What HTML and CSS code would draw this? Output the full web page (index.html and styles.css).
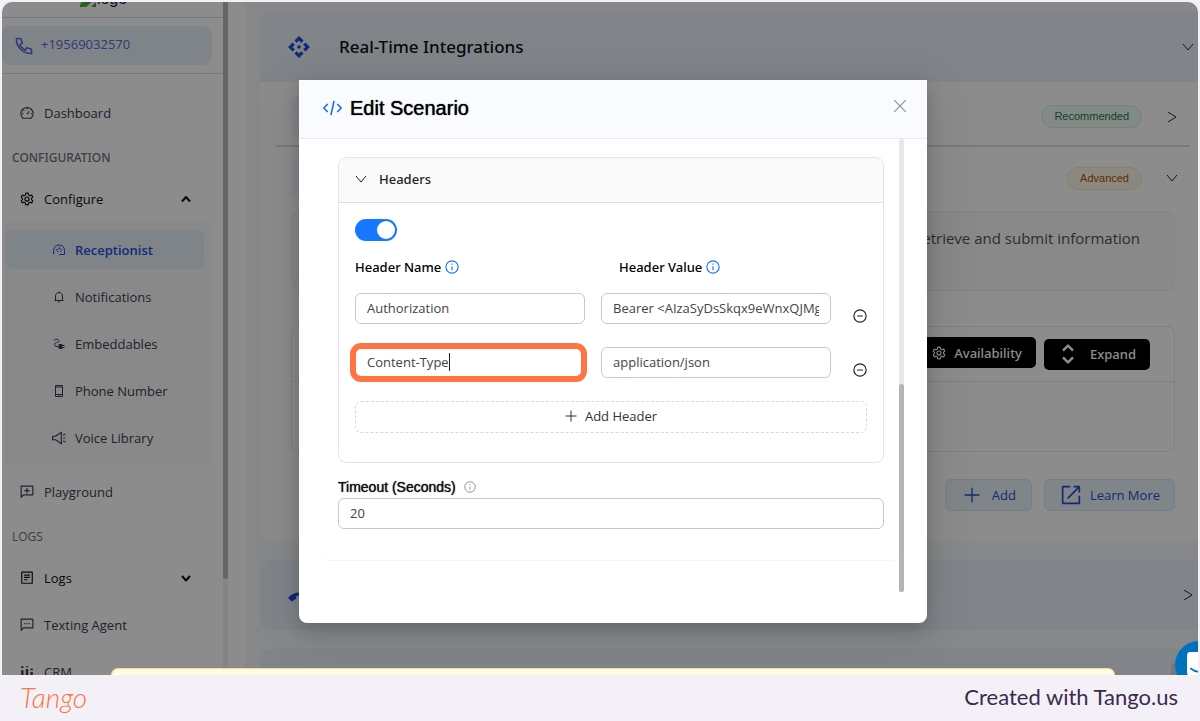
FILE: index.html
```html
<!DOCTYPE html>
<html lang="en">
<head>
<meta charset="utf-8">
<title>Edit Scenario</title>
<link rel="stylesheet" href="styles.css">
</head>
<body>
<svg class="sprite" aria-hidden="true">
  <symbol id="gear" viewBox="0 0 24 24"><path d="M10 2h4l.7 3.100 2.300 1.300 3-1 2 3.500-2.300 2.100v2l2.300 2.100-2 3.500-3-1-2.300 1.300-.7 3.100h-4l-.7-3.100L7 17.600l-3 1-2-3.500L4.300 13v-2L2 8.900l2-3.500 3 1 2.300-1.300z"/><circle cx="12" cy="12" r="3.500"/></symbol>
  <symbol id="down" viewBox="0 0 24 24"><path d="m2 6 10 12L22 6"/></symbol>
  <symbol id="right" viewBox="0 0 24 24"><path d="m4 2 16 10-16 10"/></symbol>
  <symbol id="info" viewBox="0 0 24 24"><circle cx="12" cy="12" r="10.500"/><path d="M12 10.500v7M12 6v2"/></symbol>
  <symbol id="minus" viewBox="0 0 24 24"><circle cx="12" cy="12" r="10.500"/><path d="M7 12h10"/></symbol>
  <symbol id="plus" viewBox="0 0 24 24"><path d="M12 1v22M1 12h22"/></symbol>
</svg>
<main class="stage">
  <aside class="sidebar">
    <nav class="nav">
      <div class="brand"><svg class="broken" viewBox="0 0 16 16"><path fill="#c3d9f2" d="M0 0h16v8l-9 8H0z"/><path fill="#4caf35" d="M0 14 6 7l5 4-5 5H0z"/><path fill="#5b9a4d" d="m11 16 5-5v5z"/></svg><span>logo</span></div>
      <a class="phone" href="#"><svg class="ico i20" viewBox="0 0 24 24"><path d="M3 3h5l2 5.500-3 2c1.500 3 3.500 5 6.500 6.500l2-3L21 16v5C11 21.500 2.500 13 3 3z"/></svg><span>+19569032570</span></a>
      <div class="menu">
        <a class="item" href="#"><svg class="ico i14" viewBox="0 0 24 24"><path d="M5 21h14c2-2 3.500-4.500 3.500-8a10.500 10.500 0 0 0-21 0c0 3.500 1.500 6 3.500 8zM12 14l4-5M12 3v3M4 13h2M18 13h2M6 7l1.500 1.500"/></svg><span>Dashboard</span></a>
        <h2 class="group strong">CONFIGURATION</h2>
        <button class="item dark" type="button"><svg class="ico i14"><use href="#gear"/></svg><span>Configure</span><svg class="ico caret" viewBox="0 0 24 24"><path d="m4 17 8-9 8 9"/></svg></button>
        <div class="sub">
          <a class="item on" href="#"><svg class="ico i12" viewBox="0 0 24 24"><path d="M3 19H1v-6C1 6 6 2 12 2s11 4 11 11v8H12M5 12c5 0 7-2 8-5 1 3 3 5 6 5"/><path d="M9 14v2M15 14v2"/></svg><span>Receptionist</span></a>
          <a class="item" href="#"><svg class="ico i12" viewBox="0 0 24 24"><path d="M3 19h18M5 19v-9c0-9 14-9 14 0v9M12 1v3M10 22h4"/></svg><span>Notifications</span></a>
          <a class="item" href="#"><svg class="ico i12" viewBox="0 0 24 24"><path d="M2 5c2-4 10-3 10 1S2 8 3 13s4 4 8 4"/><path fill="currentColor" d="M12 13h6v8h-6zM18 15h5M18 19h5"/></svg><span>Embeddables</span></a>
          <a class="item" href="#"><svg class="ico i12" viewBox="0 0 24 24"><path d="M5 1h14v22H5zM5 4h14M5 19h14"/><path d="M11 21h2"/></svg><span>Phone Number</span></a>
          <a class="item" href="#"><svg class="ico i14" viewBox="0 0 24 24"><path d="M1 9h5l10-7v20L6 15H1zM19 7l4-2M19 12h4M19 17l4 2"/></svg><span>Voice Library</span></a>
        </div>
        <a class="item" href="#"><svg class="ico i14" viewBox="0 0 24 24"><path d="M2 2h20v15H6l-4 4zM12 5v9M7.500 9.500h9"/></svg><span>Playground</span></a>
        <h2 class="group">LOGS</h2>
        <button class="item dark" type="button"><svg class="ico i14" viewBox="0 0 24 24"><path d="M3 2h18v19H3zM7 7h10M7 11h10M7 15h6"/></svg><span>Logs</span><svg class="ico caret" viewBox="0 0 24 24"><path d="m4 8 8 9 8-9"/></svg></button>
        <a class="item" href="#"><svg class="ico i14" viewBox="0 0 24 24"><path d="M2 2h20v15H6l-4 4zM7 9.500h2M11 9.500h2M15 9.500h2"/></svg><span>Texting Agent</span></a>
        <a class="item" href="#"><svg class="ico i14 bars" viewBox="0 0 24 24"><path d="M4 9v13M12 7v15M20 12v10M4 2v3M12 2v2M20 6v3"/></svg><span>CRM</span></a>
      </div>
    </nav>
    <div class="side-track"><div class="side-thumb"></div></div>
  </aside>

  <div class="content">
    <section class="card">
      <header class="card-head">
        <svg class="i22 blue" viewBox="0 0 24 24" fill="currentColor"><path d="m12 0 5 5-2.500 2.500L12 5 9.500 7.500 7 5zM12 24l-5-5 2.500-2.500L12 19l2.500-2.500L17 19zM0 12l5-5 2.500 2.500L5 12l2.500 2.500L5 17zM24 12l-5 5-2.500-2.500L19 12l-2.500-2.500L19 7z"/><circle cx="12" cy="12" r="2"/></svg>
        <h1>Real-Time Integrations</h1>
        <svg class="ico i12 end"><use href="#down"/></svg>
      </header>
      <div class="card-body">
        <div class="row first"><span class="tile"></span><span class="tag green">Recommended</span><svg class="ico i12"><use href="#right"/></svg></div>
        <div class="row"><span class="tile"></span><span class="tag amber">Advanced</span><svg class="ico i12"><use href="#down"/></svg></div>
        <div class="detail">
          <p class="note">retrieve and submit information</p>
          <div class="box">
            <div class="box-head">
              <button class="black" type="button"><svg class="ico i14"><use href="#gear"/></svg>Availability</button>
              <button class="black expand" type="button"><svg class="ico thick i20" viewBox="0 0 24 24"><path d="m6 8 6-6 6 6M6 16l6 6 6-6"/></svg>Expand</button>
            </div>
          </div>
          <div class="actions">
            <button class="soft" type="button"><svg class="ico i16"><use href="#plus"/></svg>Add</button>
            <a class="soft learn" href="#"><svg class="ico i20" viewBox="0 0 24 24"><path d="M11 2H2v20h20v-9M15 2h7v7M22 2 8 16"/></svg>Learn More</a>
          </div>
        </div>
      </div>
    </section>
    <section class="card">
      <header class="card-head"><svg class="i22 blue lower" viewBox="0 0 24 24" fill="currentColor"><path d="M0 13C6 5 18 5 24 13l-4 4-5-3v-3c-2-1-4-1-6 0v3l-5 3z"/></svg><svg class="ico i12 end"><use href="#right"/></svg></header>
    </section>
    <section class="card"><header class="card-head"></header></section>
  </div>

  <div class="mask">
    <form class="modal" role="dialog" aria-labelledby="title">
      <header class="modal-head">
        <svg class="ico code" viewBox="0 0 24 20"><path d="M6 5 1 10l5 5M18 5l5 5-5 5M14 1 10 19"/></svg>
        <h2 id="title">Edit Scenario</h2>
        <button class="close" type="button" aria-label="Close"><svg class="ico i14" viewBox="0 0 24 24"><path d="m2 2 20 20M22 2 2 22"/></svg></button>
      </header>
      <div class="modal-body">
        <div class="scroller">
          <div class="sheet">
            <section class="panel">
              <button class="panel-head" type="button"><svg class="ico i12"><use href="#down"/></svg>Headers</button>
              <div class="panel-body">
                <input class="switch" type="checkbox" role="switch" aria-label="Headers" checked>
                <div class="grid labels"><span>Header Name <svg class="ico i14"><use href="#info"/></svg></span><span>Header Value <svg class="ico i14"><use href="#info"/></svg></span></div>
                <div class="grid">
                  <input class="field" aria-label="Header name 1" value="Authorization">
                  <input class="field" aria-label="Header value 1" value="Bearer &lt;AIzaSyDsSkqx9eWnxQJMg7">
                  <button class="remove" type="button" aria-label="Remove header 1"><svg class="ico i14"><use href="#minus"/></svg></button>
                </div>
                <div class="grid">
                  <div class="focus"><input class="field" aria-label="Header name 2" value="Content-Type"><i class="cursor"></i></div>
                  <input class="field" aria-label="Header value 2" value="application/json">
                  <button class="remove" type="button" aria-label="Remove header 2"><svg class="ico i14"><use href="#minus"/></svg></button>
                </div>
                <button class="add" type="button"><svg class="ico i12"><use href="#plus"/></svg>Add Header</button>
              </div>
            </section>
            <label class="timeout" for="timeout">Timeout (Seconds) <svg class="ico i12"><use href="#info"/></svg></label>
            <input class="field" id="timeout" value="20">
          </div>
        </div>
        <div class="track"><div class="thumb"></div></div>
      </div>
    </form>
  </div>
  <div class="toast"></div>
  <div class="chat-base"></div>
  <button class="chat" type="button" aria-label="Chat"><svg viewBox="0 0 24 24"><rect x="1" y="0" width="22" height="22" rx="3" fill="#fff"/><path d="M4 15c5 4 11 4 16 0" fill="none" stroke="#0071bd" stroke-width="1.500"/></svg></button>
</main>
<footer class="footer"><span class="logo">Tango</span><span class="credit">Created with Tango.us</span></footer>
</body>
</html>
```
FILE: styles.css
```css
* { box-sizing: border-box; }
body { margin: 0; min-height: 100vh; display: flex; flex-direction: column; background: #f3f1f7; color: #1f2937; font: 13px/20px "Open Sans", "Noto Sans", sans-serif; }
button, input { font: inherit; color: inherit; }
button { margin: 0; padding: 0; border: 0; background: none; }
a { color: inherit; text-decoration: none; }
h1, h2, p { margin: 0; }
svg { display: block; flex: none; }
.sprite { position: absolute; width: 0; height: 0; }
.ico { fill: none; stroke: currentColor; stroke-width: 2; stroke-linejoin: round; }
.thick { stroke-width: 3; }
.i12 { width: 12px; height: 12px; }
.i14 { width: 14px; height: 14px; }
.i16 { width: 16px; height: 16px; }
.i20 { width: 20px; height: 20px; }
.i22 { width: 22px; height: 22px; }
.blue { color: #1d4fdb; }

.stage { position: relative; flex: 1 0 0; min-height: 0; display: flex; margin: 2px 2px 0; overflow: hidden; border-radius: 10px 10px 0 0; background: #fff; }

.sidebar { display: flex; flex: none; width: 226px; }
.nav { flex: 1; min-width: 0; }
.brand { display: flex; align-items: start; justify-content: center; gap: 1px; height: 16px; padding-right: 18px; border-bottom: 1px solid #d4d7de; font: 16px/20px "Liberation Sans", sans-serif; overflow: hidden; }
.broken { width: 16px; height: 16px; }
.brand svg { margin-top: -11px; }
.brand span { margin-top: -13px; }
.phone { display: flex; align-items: center; gap: 7px; height: 39px; margin: 8px 11px 8px 0; padding: 0 12px; border-radius: 8px; background: #e8f0fa; color: #6366d1; }
.phone span { padding-bottom: 4px; }
.menu { display: flex; flex-direction: column; padding-top: 19px; border-top: 1px solid #d3dbf5; }
.item { display: flex; flex: none; align-items: center; gap: 10px; height: 39px; margin-bottom: 8px; padding: 0 27px 0 18px; color: #374151; text-align: left; }
.item.dark { color: #111; }
.caret { width: 12px; height: 12px; margin-left: auto; margin-right: 4px; stroke-width: 4; }
.bars { stroke-width: 4; }
.group { height: 20px; margin: 8px 10px 11px; font-size: 12px; font-weight: 400; color: #6b7280; }
.group.strong { font-family: "Noto Sans", sans-serif; font-weight: 500; }
.sub { display: flex; flex-direction: column; gap: 8px; margin: -4px 11px 7px 3px; padding: 8px; background: #fafafa; }
.sub .item { margin: 0 0 0 -8px; padding-left: 48px; border-radius: 8px; }
.sub .item.on { background: #e8f0fa; color: #1d4ed8; font-weight: 600; }
.sub .i14 { margin: 0 -1px; }
.side-track { width: 5px; background: #f0f0f0; }
.side-thumb { height: 577px; border-radius: 0 0 3px 3px; background: #bbb; }

.content { display: flex; flex: 1; min-width: 0; flex-direction: column; gap: 19px; margin: 0 -8px 0 17px; padding: 10px 0 0 15px; background: #f5f7fa; }
.card { flex: none; border-radius: 10px; background: #fff; overflow: hidden; }
.card-head { display: flex; align-items: center; height: 70px; padding: 0 12px 0 28px; background: #ecf3fc; }
.card-head h1 { margin-left: 29px; font: 500 17px/24px "Noto Sans", sans-serif; color: #111; }
.end { margin-left: auto; }
.card-body { padding: 0 16px 32px; }
.row { display: flex; align-items: center; justify-content: end; height: 62px; padding: 0 12px 0 15px; }
.first { height: 65px; padding-top: 6px; border-bottom: 2px solid #ddd; }
.row .ico { margin-left: 24px; }
.tile { width: 40px; height: 40px; margin-right: auto; border-radius: 8px; background: #f5f7ff; }
.tag { padding: 0 12px; border: 1px solid; border-radius: 12px; font: 12px/21px "Liberation Sans", sans-serif; }
.tag { font-size: 11px; }
.green { border-color: #d0f0df; background: #effaf4; color: #15803d; }
.amber { border-color: #f5e8c0; background: #fdf8e8; color: #b45309; }
.detail { padding: 2px 15px 0; }
.note { height: 80px; padding: 16px 34px; border: 1px solid #e8eef9; border-radius: 10px; background: #f9fafc; font-size: 15px; text-align: right; color: #4b5563; }
.box { height: 126px; margin: 35px 0 27px; border: 1px solid #e5e7eb; border-radius: 8px; }
.box-head { display: flex; align-items: center; justify-content: end; gap: 8px; height: 55px; padding: 0 24px; border-bottom: 1px solid #e5e7eb; }
.black { display: flex; align-items: center; gap: 8px; height: 31px; margin-bottom: 3px; padding: 0 14px; border-radius: 5px; background: #000; color: #fff; font-family: "Noto Sans", sans-serif; font-weight: 500; }
.expand { gap: 12px; margin: 0; padding: 0 14px; }
.actions { display: flex; justify-content: end; gap: 12px; }
.soft { display: flex; align-items: center; gap: 12px; height: 32px; padding: 0 15px 0 18px; border: 1px solid #d5e4fb; border-radius: 6px; background: #eaf2fb; color: #2451c9; }
.learn { gap: 9px; padding: 0 14px 0 16px; }
.lower { margin-top: 4px; }
.card-body { padding-bottom: 30px; }

.mask { position: absolute; inset: 0; display: flex; justify-content: center; align-items: start; padding: 78px 0 0 26px; background: rgba(0, 0, 0, .45); }
.modal { width: 628px; max-width: 100%; border-radius: 0 0 8px 8px; background: #fff; box-shadow: 0 6px 16px rgba(0,0,0,.16), 0 9px 48px 8px rgba(0,0,0,.1); overflow: hidden; }
.modal-head { display: flex; align-items: center; gap: 8px; height: 59px; padding: 0 20px 3px 24px; border-bottom: 1px solid #e5e8ec; background: #f9fbfe; }
.modal-head h2 { font: 20px/24px "Liberation Sans", sans-serif; color: #000; text-shadow: 0 0 1px #000; }
.code { width: 19px; height: 16px; color: #1668f5; }
.close { margin-left: auto; padding-bottom: 3px; color: #909399; }
.modal-body { display: flex; padding: 0 23px 31px; }
.scroller { flex: 1; min-width: 0; padding-bottom: 31px; }
.sheet { padding: 18px 15px 31px 16px; border-bottom: 1px solid #f4f4f4; border-radius: 0 0 8px 8px; }
.track { display: flex; flex-direction: column; justify-content: end; width: 5px; border-radius: 3px; background: #e8e8e8; }
.thumb { height: 46%; border-radius: 3px; background: #b5b5b5; }
.panel { border: 1px solid #e5e5e5; border-radius: 8px; overflow: hidden; }
.panel-head { display: flex; align-items: center; gap: 12px; width: 100%; height: 45px; padding: 0 16px 2px; border-bottom: 1px solid #dcdcdc; background: #fafafa; color: #222; font-family: "Noto Sans", sans-serif; font-weight: 500; }
.panel-body { padding: 16px 16px 29px; }
.switch { appearance: none; display: block; width: 42px; height: 22px; margin: 0 0 15px; padding: 2px; border-radius: 11px; background: #1677ff; }
.switch::before { content: ""; display: block; width: 18px; height: 18px; margin-left: auto; border-radius: 50%; background: #fff; }
.grid { display: grid; grid-template-columns: 1fr 1fr 20px; gap: 16px; margin-bottom: 23px; }
.labels { margin-bottom: 15px; font-family: "Noto Sans", sans-serif; line-height: 22px; font-weight: 500; color: #000; }
.labels span { display: flex; align-items: center; gap: 4px; }
.labels span + span { padding-left: 18px; }
.labels svg { color: #1677ff; }
.field { display: block; width: 100%; min-width: 0; height: 31px; padding: 0 11px 2px; border: 1px solid #ccc6cb; border-radius: 6px; background: #fff; color: #444; outline: 0; }
.remove { display: flex; justify-content: end; padding-top: 16px; color: #222; }
.focus { position: relative; }
.focus::after { content: ""; position: absolute; inset: -4px -2px -4px -5px; border: 6px solid #ff7442; border-radius: 11px; }
.cursor { position: absolute; left: 94px; top: 6px; width: 1px; height: 18px; background: #222; }
.add { display: flex; align-items: center; justify-content: center; gap: 8px; width: 100%; height: 32px; padding-bottom: 2px; border: 1px dashed #d9d9d9; border-radius: 6px; color: #333; }
.timeout { display: flex; align-items: center; gap: 8px; margin-top: 13px; font: 14px/22px "Liberation Sans", sans-serif; color: #111; text-shadow: 0 0 1px #111; }
.timeout svg { color: #999; }

.toast { position: absolute; left: 109px; right: 83px; bottom: 0; height: 7px; border: 1px solid #f5dc8e; border-bottom: 0; border-radius: 8px 8px 0 0; background: #fffbe6; }
.chat-base { position: absolute; right: 0; bottom: 0; width: 27px; height: 12px; border-radius: 4px 0 0; background: #777; }
.chat { position: absolute; right: -25px; bottom: -14px; width: 48px; height: 48px; padding: 11px; border-radius: 50%; background: #0071bd; }

.footer { display: flex; flex: none; align-items: center; justify-content: space-between; height: 46px; padding: 0 22px 2px 20px; }
.logo { font: italic 300 28px/32px Lato, sans-serif; color: #ff7442; }
.credit { font: 22px/32px Lato, sans-serif; color: #3b2a4d; }
```
